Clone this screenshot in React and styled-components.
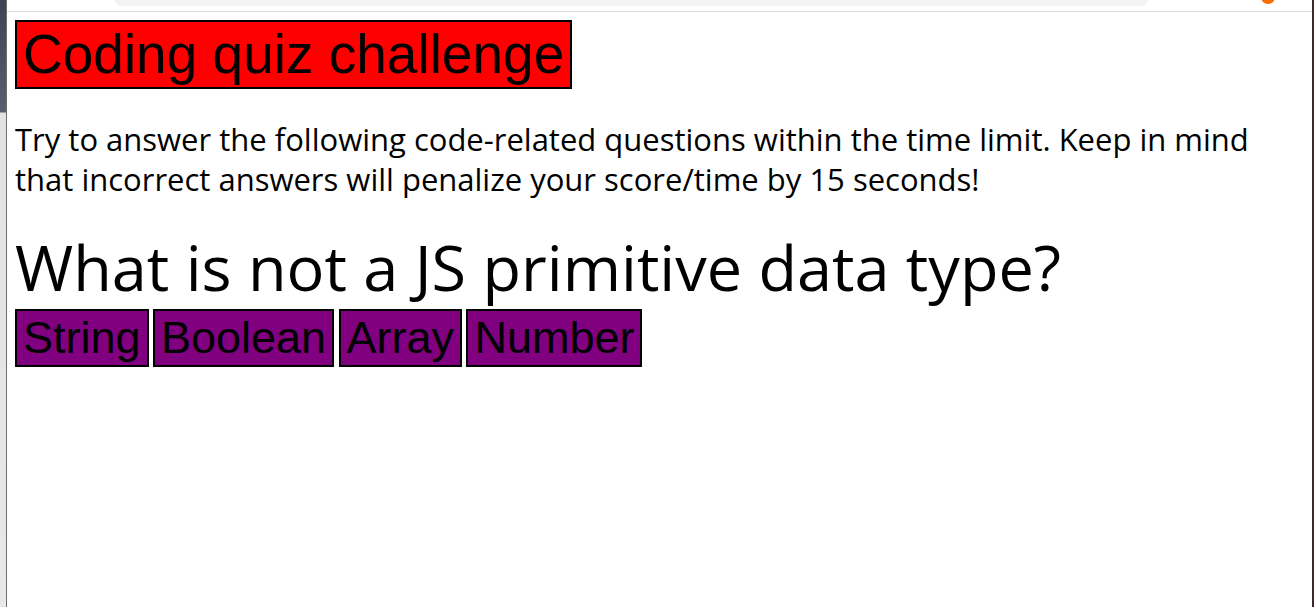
import React from "react";
import styled, { createGlobalStyle } from "styled-components";

const GlobalStyle = createGlobalStyle`
  html, body {
    margin: 0;
    padding: 0;
    height: 100%;
    overflow: hidden;
    background: #ffffff;
  }
`;

const Screen = styled.div`
  display: flex;
  height: 100vh;
  background: #ffffff;
`;

const DesktopEdge = styled.div`
  width: 6px;
  flex: none;
  background: linear-gradient(
    to bottom,
    #3b4450 0,
    #58626c 112px,
    #e2e2e2 113px,
    #e8e8e8 100%
  );
  border-right: 1px solid #6d6d6d;
`;

const RightEdge = styled.div`
  width: 2px;
  flex: none;
  background: #3b2c27;
`;

const Window = styled.div`
  flex: 1;
  display: flex;
  flex-direction: column;
  min-width: 0;
`;

const Chrome = styled.div`
  height: 11px;
  flex: none;
  display: flex;
  align-items: flex-start;
  padding-left: 108px;
  border-bottom: 1px solid #dadce0;
  overflow: hidden;
`;

const UrlBox = styled.div`
  width: 1033px;
  height: 6px;
  background: #f1f3f4;
  border-radius: 0 0 10px 10px;
`;

const ProfileDot = styled.div`
  width: 14px;
  height: 14px;
  margin-top: -10px;
  margin-left: 113px;
  border-radius: 50%;
  background: #fb6c04;
`;

const Page = styled.main`
  padding: 8px;
  color: #000000;
`;

const Title = styled.h1`
  display: inline-block;
  margin: 0;
  padding: 1px 6px;
  background: #ff0000;
  border: 2px solid #000000;
  font-family: "Liberation Sans", Arial, sans-serif;
  font-weight: normal;
  font-size: 55px;
  line-height: 1.15;
`;

const Intro = styled.p`
  margin: 30px 0 0;
  font-family: "Open Sans", "Noto Sans", sans-serif;
  font-size: 31px;
  line-height: 40px;
`;

const Question = styled.h2`
  margin: 38px 0 12px;
  font-family: "Open Sans", "Noto Sans", sans-serif;
  font-weight: normal;
  font-size: 63px;
  line-height: 60px;
`;

const Answers = styled.div`
  display: flex;
  gap: 4.4px;
`;

const AnswerButton = styled.button`
  margin: 0;
  padding: 1px 6px;
  background: #800080;
  border: 2px solid #000000;
  border-radius: 0;
  color: #000000;
  font-family: "Liberation Sans", Arial, sans-serif;
  font-size: 45px;
  line-height: 1.15;
  cursor: pointer;
`;

const answers = ["String", "Boolean", "Array", "Number"];

export default function App() {
  return (
    <Screen>
      <GlobalStyle />
      <DesktopEdge />
      <Window>
        <Chrome>
          <UrlBox />
          <ProfileDot />
        </Chrome>
        <Page>
          <Title>Coding quiz challenge</Title>
          <Intro>
            Try to answer the following code-related questions within the time
            limit. Keep in mind that incorrect answers will penalize your
            score/time by 15 seconds!
          </Intro>
          <Question>What is not a JS primitive data type?</Question>
          <Answers>
            {answers.map((a) => (
              <AnswerButton key={a}>{a}</AnswerButton>
            ))}
          </Answers>
        </Page>
      </Window>
      <RightEdge />
    </Screen>
  );
}
